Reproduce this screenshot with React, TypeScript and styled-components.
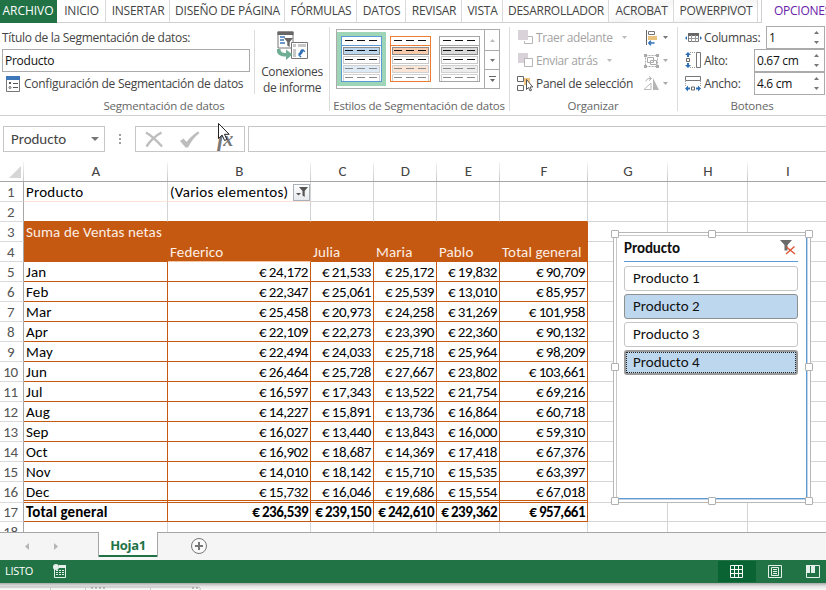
import React from 'react';
import styled, { createGlobalStyle, css } from 'styled-components';

const ORANGE = '#c55911';
const GREEN = '#217346';
const SHEET_FONT = 'Carlito, Calibri, "Open Sans", sans-serif';
const UI_FONT = '"Open Sans", "Noto Sans", sans-serif';

const Global = createGlobalStyle`
  * { box-sizing: border-box; }
  body { margin: 0; background: #fff; overflow: hidden; }
  svg { display: block; flex: none; }
`;

const Window = styled.div`
  width: 826px;
  height: 590px;
  overflow: hidden;
  display: flex;
  flex-direction: column;
  position: relative;
  background: #fff;
  color: #444;
  font: 12px/16px ${UI_FONT};
  letter-spacing: -0.25px;
  white-space: nowrap;
`;

/* Ribbon tabs */
const TabStrip = styled.nav`
  display: flex;
  height: 23px;
  flex: none;
`;
const Tab = styled.div<{ $w: number; $kind?: 'file' | 'active' | 'last'; $space?: number }>`
  width: ${p => p.$w}px;
  flex: none;
  height: 23px;
  display: flex;
  justify-content: center;
  align-items: center;
  padding-bottom: 1px;
  padding-left: 1px;
  letter-spacing: ${p => p.$space ?? -0.25}px;
  border-right: 1px solid #dadada;
  border-bottom: 1px solid #d0d0d0;
  ${p => p.$kind === 'file' && css`
    background: ${GREEN}; color: #fff; border-color: ${GREEN};
    padding-right: 1px;
  `}
  ${p => p.$kind === 'last' && css`
    background: linear-gradient(160deg, #fff 30%, #f5f5f5 55%, #fff 75%);
  `}
  ${p => p.$kind === 'active' && css`
    color: #6821a8; border: 0; justify-content: flex-start; padding-left: 12px;
  `}
`;
const TabGap = styled.div`
  width: 4px;
  flex: none;
  height: 23px;
  border-right: 1px solid #d0d0d0;
  border-bottom: 1px solid #d0d0d0;
`;

/* Ribbon body */
const Ribbon = styled.div`
  height: 93px;
  flex: none;
  display: flex;
  border-bottom: 1px solid #d0d0d0;
  padding: 4px 0;
`;
const Group = styled.section<{ $w: number }>`
  width: ${p => p.$w}px;
  flex: none;
  border-right: 1px solid #dcdcdc;
  display: flex;
  flex-direction: column;
  justify-content: space-between;
`;
const GroupLabel = styled.div<{ $space?: number }>`
  height: 14px;
  line-height: 14px;
  margin: 0 1px -2px 0;
  text-align: center;
  font-size: 11.5px;
  letter-spacing: ${p => p.$space ?? -0.2}px;
  color: #666;
`;
const GroupBody = styled.div`
  display: flex;
  height: 70px;
`;
const CaptionPane = styled.div`
  width: 255px;
  border-right: 1px solid #dcdcdc;
  margin: 3px 0 3px;
  display: flex;
  flex-direction: column;
`;
const CaptionLabel = styled.div`
  height: 19px;
  padding-left: 2px;
  letter-spacing: -0.3px;
`;
const CaptionInput = styled.div`
  width: 248px;
  height: 23px;
  flex: none;
  margin: 0 0 4px 2px;
  border: 1px solid #ababab;
  padding: 2px 2px;
  line-height: 18px;
  color: #111;
`;
const ConfigRow = styled.div`
  display: flex;
  align-items: center;
  gap: 4px;
  height: 16px;
  padding-left: 6px;
  letter-spacing: -0.26px;
`;
const BigButton = styled.div`
  width: 74px;
  padding-top: 4px;
  display: flex;
  flex-direction: column;
  align-items: center;
  letter-spacing: -0.35px;
  span { line-height: 16px; }
  svg { margin-bottom: 3px; }
`;

const Gallery = styled.div`
  margin: 2px 0 0 6px;
  width: 164px;
  height: 60px;
  border: 1px solid #ababab;
  display: flex;
`;
const StyleChoice = styled.div<{ $on?: boolean }>`
  width: 49px;
  height: 54px;
  margin-top: 2px;
  padding: 4px 0 0 4px;
  background: ${p => (p.$on ? '#9fd5b7' : 'transparent')};
`;
const GalleryScroll = styled.div`
  width: 15px;
  margin-left: auto;
  border-left: 1px solid #ababab;
  display: grid;
  grid-template-rows: 20px 19px 19px;
`;
const ScrollCell = styled.div`
  display: flex;
  align-items: center;
  justify-content: center;
  & + & { border-top: 1px solid #ababab; }
`;

const Commands = styled.div`
  display: grid;
  grid-template-rows: repeat(3, 23px);
  grid-template-columns: 133px 1fr;
  height: 70px;
  margin-top: -1px;
`;
const Command = styled.div<{ $off?: boolean; $space?: number }>`
  display: flex;
  align-items: center;
  padding-left: 8px;
  color: ${p => (p.$off ? '#a3a3a3' : '#444')};
  letter-spacing: ${p => p.$space ?? -0.37}px;
  svg:first-child { margin-right: 3px; }
  span + svg { margin-left: 9px; }
`;
const PaneCommand = styled(Command)`
  svg:first-child { margin: 0 1px 0 -1px; }
`;
const IconCommand = styled.div`
  display: flex;
  align-items: center;
  gap: 3px;
`;
const Field = styled.div`
  display: flex;
  align-items: center;
  padding-left: 7px;
  height: 23px;
  gap: 2px;
  letter-spacing: -0.32px;
`;
const SizeFields = styled.div`
  display: flex;
  flex-direction: column;
  margin-top: -1px;
  height: 70px;
`;
const Spinner = styled.div<{ $w: number }>`
  width: ${p => p.$w}px;
  height: 23px;
  flex: none;
  border: 1px solid #ababab;
  margin-left: auto;
  margin-right: 2px;
  padding: 0 5px 0 2px;
  display: flex;
  justify-content: space-between;
  align-items: center;
  color: #111;
  background: #fff;
`;

/* Formula bar */
const FormulaBar = styled.div`
  height: 46px;
  flex: none;
  display: flex;
  padding: 10px 0 0 3px;
`;
const NameBox = styled.div`
  width: 102px;
  height: 26px;
  border: 1px solid #c6c6c6;
  display: flex;
  align-items: center;
  justify-content: space-between;
  padding: 0 5px 0 7px;
  font: 15px/20px ${SHEET_FONT};
  letter-spacing: -0.05px;
`;
const Grip = styled.div`
  width: 30px;
  height: 26px;
  display: flex;
  flex-direction: column;
  justify-content: center;
  align-items: center;
  gap: 2px;
  i { width: 2px; height: 2px; background: #a0a0a0; }
`;
const FormulaButtons = styled.div`
  width: 110px;
  height: 26px;
  border: 1px solid #c6c6c6;
  display: flex;
  align-items: center;
  padding-left: 9px;
  gap: 17px;
`;
const Fx = styled.span`
  font: italic bold 22px/24px "Liberation Serif", serif;
  color: #777;
  letter-spacing: -1px;
  small { font-size: 20px; }
`;
const FormulaInput = styled.div`
  flex: 1;
  height: 26px;
  margin-left: 3px;
  border: 1px solid #c6c6c6;
  border-right: 0;
`;

/* Worksheet */
const Sheet = styled.main`
  height: 370px;
  flex: none;
  overflow: hidden;
  display: grid;
  grid-template-columns: 24px 144px 143px 63px 63px 63px 88px 80px 80px 80px;
  grid-template-rows: 20px repeat(15, 20px) 21px 19px 20px;
  font: 15px/18px ${SHEET_FONT};
  letter-spacing: 0.12px;
  color: #000;
`;
const ColumnHead = styled.div`
  border-bottom: 1px solid #a6a6a6;
  background: linear-gradient(#f4f4f4, #c8c8c8) right / 1px 100% no-repeat;
  display: flex;
  justify-content: center;
  align-items: center;
  padding-bottom: 1px;
  color: #444;
`;
const Corner = styled(ColumnHead)`
  justify-content: flex-end;
  align-items: flex-end;
  padding: 0 3px 3px 0;
`;
const RowHead = styled.div`
  border-right: 1px solid #a6a6a6;
  border-bottom: 1px solid #dadada;
  color: #555;
  display: flex;
  align-items: center;
  justify-content: center;
  padding: 0 2px 0 0;
  letter-spacing: -0.4px;
`;
type CellKind = 'plain' | 'page' | 'above' | 'head' | 'names' | 'body' | 'last' | 'total';
const Cell = styled.div<{ $kind: CellKind; $num?: boolean }>`
  border-right: 1px solid #d4d4d4;
  border-bottom: 1px solid #d4d4d4;
  padding: 1px 2px 0;
  display: flex;
  align-items: center;
  min-width: 0;
  ${p => p.$num && css`
    justify-content: flex-end;
    letter-spacing: -0.43px;
    word-spacing: -0.2px;
  `}
  ${p => p.$kind === 'page' && css`
    border-bottom-color: #fbe3d8; justify-content: space-between; padding-right: 0;
    letter-spacing: 0.24px;
  `}
  ${p => p.$kind === 'above' && css`border-bottom-color: ${ORANGE};`}
  ${p => (p.$kind === 'head' || p.$kind === 'names') && css`
    background: ${ORANGE}; border-color: ${ORANGE}; color: #fdeee4;
  `}
  ${p => p.$kind === 'names' && css`border-bottom-color: #f3c3a0;`}
  ${p => (p.$kind === 'body' || p.$kind === 'last' || p.$kind === 'total') && css`
    border-color: ${ORANGE};
  `}
  ${p => p.$kind === 'last' && css`border-bottom: 3px double ${ORANGE};`}
  ${p => p.$kind === 'total' && css`font-weight: 700; padding-top: 0; line-height: 17px;`}
  ${p => p.$kind === 'total' && p.$num && css`letter-spacing: -0.5px;`}
`;
const FilterButton = styled.div`
  width: 17px;
  height: 17px;
  border: 1px solid #a9b0ba;
  background: linear-gradient(#fff, #e6e9ee);
  display: flex;
  align-items: center;
  justify-content: center;
`;

/* Slicer floating above the cells */
const SlicerFrame = styled.aside`
  position: absolute;
  left: 613px;
  top: 232px;
  width: 198px;
  height: 271px;
  padding: 2px;
  border: 1px solid #b8b8b8;
  background: #fff;
  font: 15px/20px ${SHEET_FONT};
  letter-spacing: 0;
  color: #111;
`;
const SlicerBody = styled.div`
  height: 264px;
  width: 191px;
  border: 1px solid #c9c9c9;
  border-right: 1px solid #5b9bd5;
  border-bottom: 1px solid #5b9bd5;
  box-shadow: 1px 1px 0 #c4d4e4;
  padding: 2px 8px 0 7px;
  display: flex;
  flex-direction: column;
`;
const SlicerTitle = styled.div`
  height: 24px;
  width: 174px;
  flex: none;
  border-bottom: 1px solid #5b9bd5;
  display: flex;
  justify-content: space-between;
  font-weight: 700;
  padding-right: 2px;
  margin-bottom: 4px;
  letter-spacing: -0.1px;
  svg { margin-top: 1px; }
`;
const SlicerItem = styled.div<{ $on?: boolean; $focus?: boolean }>`
  width: 174px;
  height: 25px;
  flex: none;
  margin-bottom: 3px;
  border: 1px solid ${p => (p.$on ? '#8f8f8f' : '#c6c6c6')};
  border-radius: 3px;
  background: ${p => (p.$on ? '#bdd7ee' : '#fff')};
  padding: 1px 0 0 8px;
  ${p => p.$focus && css`
    border-width: 2px;
    border-color: #999;
    padding: 0 0 0 7px;
    outline: 1px dotted #222;
    outline-offset: -3px;
  `}
`;
const Handle = styled.i<{ $x: number; $y: number }>`
  position: absolute;
  left: ${p => p.$x}px;
  top: ${p => p.$y}px;
  width: 8px;
  height: 8px;
  border: 1px solid #b0b0b0;
  border-radius: 1px;
  background: #fff;
`;
const Pointer = styled.div`
  position: absolute;
  left: 217px;
  top: 122px;
`;

/* Sheet tabs and status bar */
const SheetTabs = styled.div`
  height: 28px;
  flex: none;
  background: #f5f5f5;
  border-top: 1px solid #a6a6a6;
  display: flex;
`;
const TabNav = styled.div`
  width: 98px;
  display: flex;
  align-items: center;
  gap: 25px;
  padding: 0 0 1px 25px;
`;
const SheetTab = styled.div`
  width: 60px;
  height: 25px;
  margin-top: -1px;
  background: #fff;
  border: solid #a6a6a6;
  border-width: 0 1px;
  box-shadow: inset 0 -2px 0 ${GREEN};
  color: ${GREEN};
  font: bold 13px/26px ${UI_FONT};
  letter-spacing: -0.3px;
  text-align: center;
`;
const AddSheet = styled.div`
  display: flex;
  align-items: center;
  padding: 0 0 2px 32px;
`;
const StatusBar = styled.footer`
  height: 23px;
  flex: none;
  background: ${GREEN};
  color: #fff;
  display: flex;
  align-items: center;
  padding: 0 0 1px 5px;
  font-size: 11px;
  letter-spacing: -0.3px;
`;
const MacroIcon = styled.div`
  margin-left: 20px;
  flex: 1;
`;
const ViewButton = styled.div<{ $on?: boolean }>`
  width: 38px;
  height: 21px;
  display: flex;
  align-items: center;
  justify-content: center;
  padding-right: 1px;
  background: ${p => (p.$on ? '#0a6332' : 'transparent')};
`;
const Views = styled.div`
  display: flex;
  margin-right: -6px;
`;
const WindowShadow = styled.div`
  height: 7px;
  flex: none;
  background: linear-gradient(#aaa, #e3e3e3 45%, #fbfbfb);
`;

/* Icons */
const Caret = ({ up, color = '#777', w = 5 }: { up?: boolean; color?: string; w?: number }) => (
  <svg width={w} height={w > 5 ? 4 : 3} viewBox="0 0 6 3" preserveAspectRatio="none">
    <path d={up ? 'M0 3 3 0l3 3z' : 'M0 0h6L3 3z'} fill={color} />
  </svg>
);

const SettingsIcon = () => (
  <svg width="14" height="16">
    <path d="M.5 1v14.500h13V1" fill="#fff" stroke="#777" />
    <path d="M0 0h14v4H0z" fill="#3e78b8" />
    <path d="M3 6h2v2H3z" fill="#555" />
    <path d="M7 7.500h5M7 11.500h5" stroke="#555" />
    <circle cx="4" cy="11.500" r="1" fill="none" stroke="#666" />
  </svg>
);

const ConnectionsIcon = () => (
  <svg width="31" height="30" viewBox="0 0 31 30">
    <path d="M1 1h15v16H1z" fill="#fff" stroke="#777" />
    <path d="M.5.5h16V4H.5z" fill="#666" />
    <path d="M3 6h5M3 9h4M3 12h5" stroke="#3e78b8" strokeWidth="1.600" />
    <path d="M7 7h9l-3.300 4v5l-2.400-1.500V11z" fill="#666" />
    <path d="M14.500 11.500h16v16h-16z" fill="#fff" stroke="#777" />
    <path d="M16 13h3v3h-3zm5 0h8v3h-8zm-5 5h3v8h-3z" fill="#c8c8c8" />
    <path d="M21.500 23.500c3 0 4-1.500 4-5M21.500 23.500l2.500-2.500m-2.500 2.500 2.500 2.500m1.500-7.500-2.300 2.200m2.300-2.200 2.300 2.200" fill="none" stroke="#2f6fb5" strokeWidth="1.500" />
    <path d="M-.5 18h4c0 3 2 4 5.500 4v-3.500l6.500 5-6.500 5.500v-3.500C3 26-.5 23-.5 18z" fill="#6fae94" />
  </svg>
);

const StyleThumb = ({ line, fill, pale }: { line: string; fill: string; pale: string }) => (
  <svg width="41" height="46" viewBox="0 0 41 46">
    <rect x=".5" y=".5" width="40" height="45" fill="#fff" stroke={line} />
    <path d="M1 9.500h39" stroke={line} />
    <rect x="2.500" y="11.500" width="36" height="7" fill={fill} stroke="#8c8c8c" />
    <rect x="2.500" y="20.500" width="36" height="7" fill="#fff" stroke="#c8c8c8" />
    <rect x="2.500" y="29.500" width="36" height="7" fill={pale} stroke="#d0d0d0" />
    <path d="M2.500 45v-6.500h36V45" fill="#fff" stroke="#d0d0d0" />
    <path d="M4 4.500h33M4 14.500h33M4 23.500h33" stroke="#111" strokeDasharray="8 4" />
    <path d="M4 32.500h33M4 41.500h33" stroke="#8a8a8a" strokeDasharray="8 4" />
  </svg>
);

const ForwardIcon = () => (
  <svg width="15" height="15">
    <path d="M10 6.500h4.500v7h-8V11" fill="none" stroke="#b5b5b5" />
    <path d="M0 0h10v10H0z" fill="#d9d2d8" />
  </svg>
);
const BackwardIcon = () => (
  <svg width="15" height="15">
    <path d="M0 0h10v10H0z" fill="#d9d2d8" />
    <path d="M6.500 5.500h8v8h-8z" fill="#fff" stroke="#b5b5b5" />
  </svg>
);
const SelectionPaneIcon = () => (
  <svg width="18" height="17">
    <path d="M.5 1.500h6v5h-6zM.5 10.500h6v5h-6z" fill="#fff" stroke="#666" />
    <path d="M7 3h6v7H7z" fill="#f0c27a" />
    <path d="M9.500 4.500v10l2-2 1.500 3.500 1.500-.7-1.500-3.300h2.800z" fill="#fff" stroke="#555" />
  </svg>
);
const AlignIcon = () => (
  <svg width="17" height="16">
    <path d="M3.500 0v15" stroke="#666" />
    <path d="M5.500 1.500h6v3h-6z" fill="#fff" stroke="#777" />
    <path d="M5 6h9v4H5z" fill="#e9c27e" />
    <path d="M5.500 13h6m-6 0 2.500-2.300M5.500 13 8 15.300" fill="none" stroke="#2f6fb5" strokeWidth="1.300" />
  </svg>
);
const GroupIcon = () => (
  <svg width="17" height="16" fill="none" stroke="#aaa">
    <path d="M2.500 2.500h12v11h-12z" strokeDasharray="2 1" />
    <path d="M4.500 4.500h6v5h-6zM7.500 7.500h6v4h-6z" />
    <path d="M1 1h3v3H1zm12 0h3v3h-3zM1 12h3v3H1zm12 0h3v3h-3z" fill="#aaa" stroke="none" />
  </svg>
);
const RotateIcon = () => (
  <svg width="17" height="16">
    <path d="M10 2v12h6z" fill="#b5b5b5" />
    <path d="M8 7v6.500H1z" fill="#fff" stroke="#bbb" />
    <path d="M3 5.500c.5-3 2.500-3 5-3M6 .5l2.500 2L6 4.500" fill="none" stroke="#aaa" />
  </svg>
);
const ColumnsIcon = () => (
  <svg width="17" height="16">
    <path d="M3.500 3.500h10v8h-10z" fill="#fff" stroke="#777" />
    <path d="M3 3h11v3H3z" fill="#666" />
    <path d="M6.500 5v7m4-7v7M4 8.500h10" stroke="#999" />
    <path d="m0 8 2-2v4zm17 0-2-2v4z" fill="#2f6fb5" />
  </svg>
);
const HeightIcon = () => (
  <svg width="17" height="17">
    <path d="M11.500.5h4v15h-4z" fill="#fff" stroke="#777" />
    <path d="M5 .5h6M5 15.500h6" stroke="#999" strokeDasharray="1 1" />
    <path d="M1.500 6.500h3v3h-3z" fill="#fff" stroke="#666" />
    <path d="M3 0 6 3H4v2H2V3H0zM3 16l3-3H4v-2H2v2H0z" fill="#2f6fb5" />
  </svg>
);
const WidthIcon = () => (
  <svg width="17" height="17">
    <path d="M.5 1.500h15v4H.5z" fill="#fff" stroke="#777" />
    <path d="M.5 6v5m15-5v5" stroke="#999" strokeDasharray="1 1" />
    <path d="M6.500 12h3v3h-3z" fill="#fff" stroke="#666" />
    <path d="m0 13.500 3-3v2h2v2H3v2zM16 13.500l-3-3v2h-2v2h2v2z" fill="#2f6fb5" />
  </svg>
);
const CancelIcon = () => (
  <svg width="18" height="17" fill="none" stroke="#bdbdbd" strokeWidth="2.400">
    <path d="M1 1.500C7 5 12 10 17 15.500M16.500 1.500C10 5 5 10 1.500 15.500" />
  </svg>
);
const AcceptIcon = () => (
  <svg width="20" height="17">
    <path d="m0 10 3.500-2.500L6.500 11C10 6.500 14 3 18 .5l1.500 1.500C14 6 11 11 8 16.500H5.500z" fill="#bdbdbd" />
  </svg>
);
const FunnelIcon = () => (
  <svg width="14" height="12">
    <path d="M4 1h9l-3.300 4v6L7.500 9.500V5z" fill="#555" />
    <path d="M1 7h5L3.500 9.500z" fill="#555" />
  </svg>
);
const ClearFilterIcon = () => (
  <svg width="16" height="16">
    <path d="M0 1h12L7.500 6v5.500h-3V6z" fill="#6b6b6b" />
    <path d="m6.500 8 8.500 7M14.500 7.500 6 15" fill="none" stroke="#e05a3a" strokeWidth="1.500" />
  </svg>
);
const PointerIcon = () => (
  <svg width="14" height="20">
    <path d="M1.500 1.500v15l3.600-3.400 2.500 5.400 2.300-1-2.400-5.200h4.700z" fill="#fff" stroke="#222" />
  </svg>
);

const TABS: [string, number, ('file' | 'last')?, number?][] = [
  ['ARCHIVO', 57, 'file', -0.05],
  ['INICIO', 49],
  ['INSERTAR', 64],
  ['DISEÑO DE PÁGINA', 115],
  ['FÓRMULAS', 72],
  ['DATOS', 49],
  ['REVISAR', 56],
  ['VISTA', 41],
  ['DESARROLLADOR', 106],
  ['ACROBAT', 65, 'last'],
  ['POWERPIVOT', 84, 'last'],
];

const MONTHS: string[][] = [
  ['Jan', '24,172', '21,533', '25,172', '19,832', '90,709'],
  ['Feb', '22,347', '25,061', '25,539', '13,010', '85,957'],
  ['Mar', '25,458', '20,973', '24,258', '31,269', '101,958'],
  ['Apr', '22,109', '22,273', '23,390', '22,360', '90,132'],
  ['May', '22,494', '24,033', '25,718', '25,964', '98,209'],
  ['Jun', '26,464', '25,728', '27,667', '23,802', '103,661'],
  ['Jul', '16,597', '17,343', '13,522', '21,754', '69,216'],
  ['Aug', '14,227', '15,891', '13,736', '16,864', '60,718'],
  ['Sep', '16,027', '13,440', '13,843', '16,000', '59,310'],
  ['Oct', '16,902', '18,687', '14,369', '17,418', '67,376'],
  ['Nov', '14,010', '18,142', '15,710', '15,535', '63,397'],
  ['Dec', '15,732', '16,046', '19,686', '15,554', '67,018'],
  ['Total general', '236,539', '239,150', '242,610', '239,362', '957,661'],
];

const PIVOT_WIDTH = 6;
const ROWS: string[][] = [
  ['Producto', '(Varios elementos)'],
  [],
  ['Suma de Ventas netas'],
  ['', 'Federico', 'Julia', 'Maria', 'Pablo', 'Total general'],
  ...MONTHS.map(([m, ...v]) => [m, ...v.map(x => `€ ${x}`)]),
  [],
];

function kindOf(row: number, col: number): CellKind {
  if (row === 1 && col < 2) return 'page';
  if (col >= PIVOT_WIDTH || row < 2 || row > 17) return 'plain';
  if (row === 2) return 'above';
  if (row === 3 || (row === 4 && col !== 1)) return 'head';
  if (row === 4) return 'names';
  if (row === 16) return 'last';
  return row === 17 ? 'total' : 'body';
}

const Worksheet = () => (
  <Sheet>
    <Corner>
      <svg width="12" height="12"><path d="M12 0v12H0z" fill="#d6d6d6" /></svg>
    </Corner>
    {'ABCDEFGHI'.split('').map(c => <ColumnHead key={c}>{c}</ColumnHead>)}
    {ROWS.map((texts, i) => (
      <React.Fragment key={i}>
        <RowHead>{i + 1}</RowHead>
        {Array.from({ length: 9 }, (_, c) => (
          <Cell key={c} $kind={kindOf(i + 1, c)} $num={i > 3 && c > 0}>
            {texts[c]}
            {i === 0 && c === 1 && <FilterButton><FunnelIcon /></FilterButton>}
          </Cell>
        ))}
      </React.Fragment>
    ))}
  </Sheet>
);

const HANDLES: [number, number][] = [
  [-3, -3], [94, -3], [191, -3], [-3, 130], [191, 130], [-3, 264], [94, 264], [191, 264],
];

const Slicer = () => (
  <SlicerFrame>
    <SlicerBody>
      <SlicerTitle>Producto<ClearFilterIcon /></SlicerTitle>
      <SlicerItem>Producto 1</SlicerItem>
      <SlicerItem $on>Producto 2</SlicerItem>
      <SlicerItem>Producto 3</SlicerItem>
      <SlicerItem $on $focus>Producto 4</SlicerItem>
    </SlicerBody>
    {HANDLES.map(([x, y]) => <Handle key={`${x},${y}`} $x={x} $y={y} />)}
  </SlicerFrame>
);

const SpinArrows = () => (
  <svg width="5" height="13">
    <path d="M0 3 2.500 0 5 3zM0 10h5l-2.500 3z" fill="#777" />
  </svg>
);

export default function App() {
  return (
    <Window>
      <Global />
      <TabStrip>
        {TABS.map(([t, w, kind, space]) => <Tab key={t} $w={w} $kind={kind} $space={space}>{t}</Tab>)}
        <TabGap />
        <Tab $w={80} $kind="active">OPCIONES</Tab>
      </TabStrip>

      <Ribbon>
        <Group $w={330}>
          <GroupBody>
            <CaptionPane>
              <CaptionLabel>Título de la Segmentación de datos:</CaptionLabel>
              <CaptionInput>Producto</CaptionInput>
              <ConfigRow><SettingsIcon />Configuración de Segmentación de datos</ConfigRow>
            </CaptionPane>
            <BigButton>
              <ConnectionsIcon />
              <span>Conexiones</span>
              <span>de informe</span>
            </BigButton>
          </GroupBody>
          <GroupLabel>Segmentación de datos</GroupLabel>
        </Group>

        <Group $w={180}>
          <GroupBody>
            <Gallery>
              <StyleChoice $on><StyleThumb line="#5b9bd5" fill="#bdd7ee" pale="#deebf7" /></StyleChoice>
              <StyleChoice><StyleThumb line="#ed7d31" fill="#f8cbad" pale="#fbe5d6" /></StyleChoice>
              <StyleChoice><StyleThumb line="#a5a5a5" fill="#dbdbdb" pale="#ededed" /></StyleChoice>
              <GalleryScroll>
                <ScrollCell><Caret up color="#bbb" /></ScrollCell>
                <ScrollCell><Caret /></ScrollCell>
                <ScrollCell>
                  <svg width="7" height="7"><path d="M0 .5h7" stroke="#666" /><path d="M1 3h5L3.500 6z" fill="#666" /></svg>
                </ScrollCell>
              </GalleryScroll>
            </Gallery>
          </GroupBody>
          <GroupLabel $space={-0.24}>Estilos de Segmentación de datos</GroupLabel>
        </Group>

        <Group $w={168}>
          <Commands>
            <Command $off><ForwardIcon /><span>Traer adelante</span><Caret color="#bbb" /></Command>
            <IconCommand><AlignIcon /><Caret /></IconCommand>
            <Command $off><BackwardIcon /><span>Enviar atrás</span><Caret color="#bbb" /></Command>
            <IconCommand><GroupIcon /><Caret color="#aaa" /></IconCommand>
            <PaneCommand $space={-0.31}><SelectionPaneIcon /><span>Panel de selección</span></PaneCommand>
            <IconCommand><RotateIcon /><Caret color="#aaa" /></IconCommand>
          </Commands>
          <GroupLabel>Organizar</GroupLabel>
        </Group>

        <Group $w={150}>
          <SizeFields>
            <Field><ColumnsIcon />Columnas:<Spinner $w={59}>1<SpinArrows /></Spinner></Field>
            <Field><HeightIcon />Alto:<Spinner $w={71}>0.67 cm<SpinArrows /></Spinner></Field>
            <Field><WidthIcon />Ancho:<Spinner $w={71}>4.6 cm<SpinArrows /></Spinner></Field>
          </SizeFields>
          <GroupLabel>Botones</GroupLabel>
        </Group>
      </Ribbon>

      <FormulaBar>
        <NameBox>Producto<Caret w={8} /></NameBox>
        <Grip><i /><i /><i /></Grip>
        <FormulaButtons>
          <CancelIcon />
          <AcceptIcon />
          <Fx>f<small>x</small></Fx>
        </FormulaButtons>
        <FormulaInput />
      </FormulaBar>

      <Worksheet />

      <SheetTabs>
        <TabNav>
          <svg width="4" height="7"><path d="M4 0v7L0 3.500z" fill="#b5b5b5" /></svg>
          <svg width="4" height="7"><path d="M0 0v7l4-3.500z" fill="#b5b5b5" /></svg>
        </TabNav>
        <SheetTab>Hoja1</SheetTab>
        <AddSheet>
          <svg width="18" height="18">
            <circle cx="9" cy="9" r="7.500" fill="#fafafa" stroke="#777" />
            <path d="M9 5v8M5 9h8" stroke="#777" strokeWidth="2" />
          </svg>
        </AddSheet>
      </SheetTabs>

      <StatusBar>
        LISTO
        <MacroIcon>
          <svg width="14" height="14">
            <path d="M1.500 4v9.500h11V4" fill="none" stroke="#e6f0ea" />
            <path d="M6 1h7v3H6z" fill="#e6f0ea" />
            <path d="M3 6.500h9M3 8.500h9M3 10.500h9" stroke="#e6f0ea" strokeDasharray="2 1" />
            <circle cx="3" cy="3" r="3" fill="#e6f0ea" />
          </svg>
        </MacroIcon>
        <Views>
          <ViewButton $on>
            <svg width="13" height="13" fill="none" stroke="#fff"><path d="M.5.5h12v12H.5zM4.500 0v13M8.500 0v13M0 4.500h13M0 8.500h13" /></svg>
          </ViewButton>
          <ViewButton>
            <svg width="14" height="13" fill="none" stroke="#e6f0ea"><path d="M.5.5h13v12H.5zM3.500 2.500h7v8h-7zM5 4.500h4M5 6.500h4M5 8.500h4" /></svg>
          </ViewButton>
          <ViewButton>
            <svg width="14" height="13"><path d="M.5.5h13v12H.5z" fill="none" stroke="#e6f0ea" /><path d="M0 0h4v8H0zM5 0h4v8H5z" fill="#e6f0ea" /></svg>
          </ViewButton>
        </Views>
      </StatusBar>
      <WindowShadow>
        <svg width="202" height="7" fill="none">
          <path d="M0 4h199q2 1 1 3" stroke="#999" strokeOpacity=".6" />
          <path d="M50.500 3v4M85.500 3v4M150.500 3v4" stroke="#ccc" />
          <path d="M91 5h14M192 5h6" stroke="#888" strokeDasharray="2 2" />
        </svg>
      </WindowShadow>

      <Slicer />
      <Pointer><PointerIcon /></Pointer>
    </Window>
  );
}
